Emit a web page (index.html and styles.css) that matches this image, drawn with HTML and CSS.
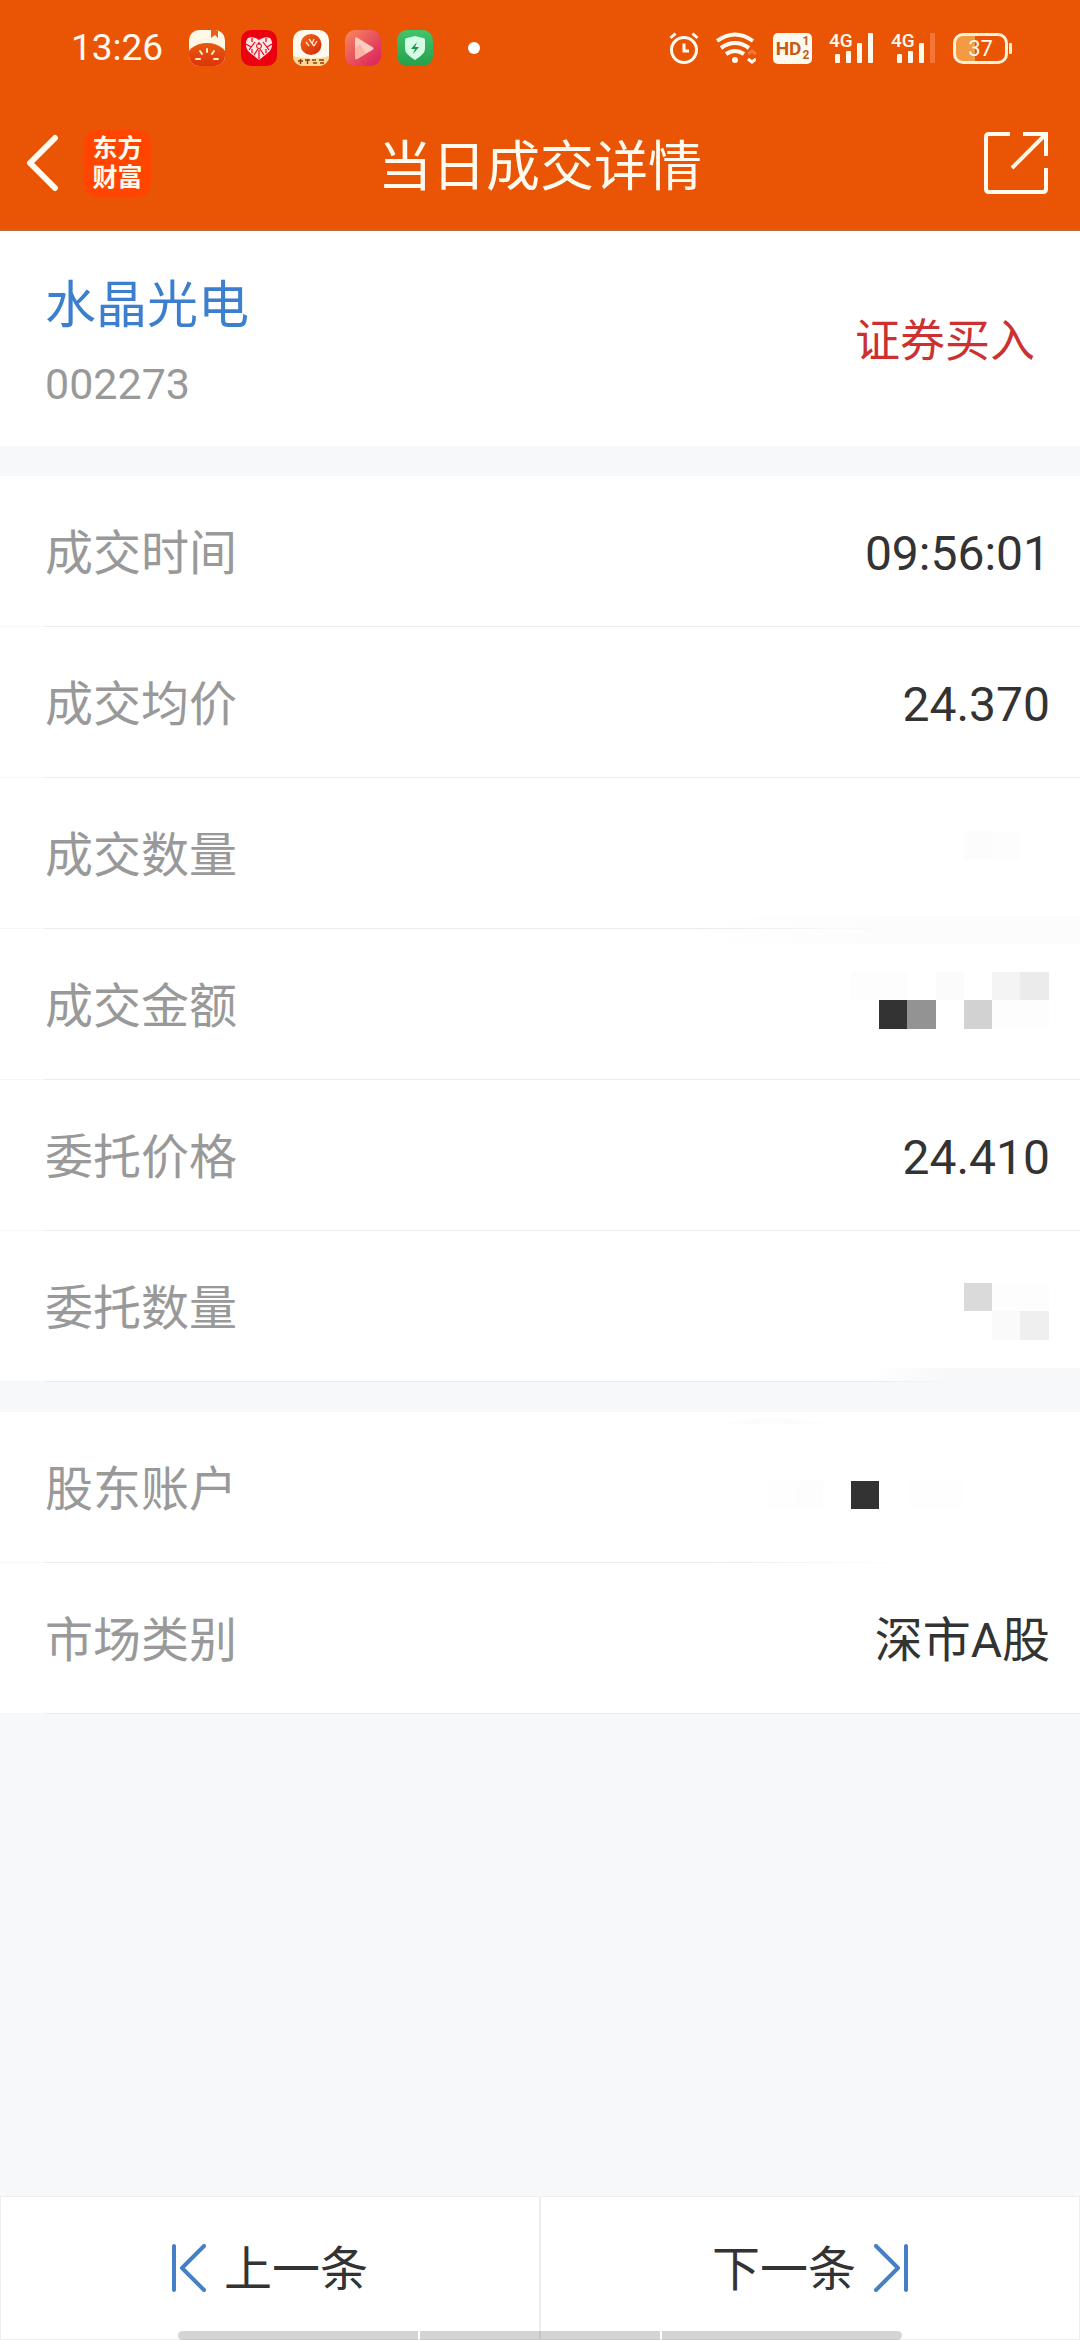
FILE: index.html
```html
<!DOCTYPE html>
<html lang="zh-CN">
<head>
<meta charset="utf-8">
<meta name="viewport" content="width=device-width, initial-scale=1">
<title>当日成交详情</title>
<link rel="stylesheet" href="styles.css">
</head>
<body>
<div class="app">
  <header class="top">
    <div class="status">
      <time class="clock">13:26</time>
      <div class="apps">
        <svg class="app-icon" viewBox="0 0 36 36" aria-hidden="true">
          <defs>
            <clipPath id="tile"><rect width="36" height="36" rx="10"/></clipPath>
            <linearGradient id="melon" x1="0" y1="0" x2="0" y2="1"><stop offset="0" stop-color="#e85a10"/><stop offset="1" stop-color="#d81e08"/></linearGradient>
          </defs>
          <g clip-path="url(#tile)">
            <rect width="36" height="36" fill="#fff8e6"/>
            <path d="M22 0h7v8l-3-3-4 3z" fill="#e4601c"/>
            <ellipse cx="18" cy="31" rx="22" ry="18" fill="url(#melon)"/>
            <path d="M18 19v3M11 21l2 3M25 21l-2 3M7 29h4M25 29h4" stroke="#ffeac8" stroke-width="2" stroke-linecap="round"/>
          </g>
        </svg>
        <svg class="app-icon" viewBox="0 0 36 36" aria-hidden="true">
          <rect width="36" height="36" rx="10" fill="#ec0010"/>
          <path d="M18 30L8 22C4 18 4 11 7 8c4-2 8 0 11 2 3-2 7-4 11-2 3 3 3 10-1 14z" fill="#fbe6e6"/>
          <path d="M18 12v3M18 20v9M11 8v4M25 8v4M11 19v4M25 19v4M5 14l5 3M31 14l-5 3M14 12l-6 8M22 12l6 8M13 25l4-6M23 25l-4-6" fill="none" stroke="#ec0010" stroke-width="1.200"/>
          <circle cx="18" cy="16" r="2.500" fill="none" stroke="#ec0010" stroke-width="1"/>
        </svg>
        <svg class="app-icon" viewBox="0 0 36 36" aria-hidden="true">
          <defs><linearGradient id="ball" x1="0" y1="0" x2="1" y2="1"><stop offset="0" stop-color="#ee6a18"/><stop offset="1" stop-color="#d8260a"/></linearGradient></defs>
          <g clip-path="url(#tile)">
            <rect width="36" height="36" fill="#fffaf0"/>
            <path d="M0 26q18 5 36 0v10H0z" fill="#fbd796"/>
            <circle cx="18" cy="14.500" r="10.500" fill="url(#ball)"/>
            <path d="M13 12l3 4M16 9l5 7M21 9l-2 5M24 11l-3 5" stroke="#ffe2c4" stroke-width="1.400"/>
            <path d="M5 31h5M7.500 29v5M12 30h5M14.500 29v5M19 30h4M20 33h4M26 30h5M27 33h4" stroke="#8a4010" stroke-width="1.500"/>
          </g>
        </svg>
        <svg class="app-icon" viewBox="0 0 36 36" aria-hidden="true">
          <defs><linearGradient id="video" x1="0" y1="0" x2="1" y2="1"><stop offset="0" stop-color="#f98a5c"/><stop offset="1" stop-color="#d81c60"/></linearGradient></defs>
          <rect width="36" height="36" rx="10" fill="url(#video)"/>
          <path d="M10 8.500q0-2 2-1l16 10q1 1 0 2l-16 9.500q-2 .500-2-1z" fill="#fdcdc2"/>
          <path d="M10 19l5-5 6 9-9 6q-2 .500-2-1z" fill="#fbb4a4"/>
        </svg>
        <svg class="app-icon" viewBox="0 0 36 36" aria-hidden="true">
          <defs><linearGradient id="guard" x1="0" y1="0" x2="0" y2="1"><stop offset="0" stop-color="#42c46c"/><stop offset="1" stop-color="#26a04a"/></linearGradient></defs>
          <rect width="36" height="36" rx="10" fill="url(#guard)"/>
          <path d="M8 10q0-2 2-2l8-2 8 2q2 0 2 2v9q0 5-10 11Q8 24 8 19z" fill="#d4fbe4"/>
          <path d="M20 12l-6 7h4l-2 5 6-7h-4z" fill="#1c9348"/>
        </svg>
      </div>
      <span class="more-dot"></span>
      <div class="signals">
        <svg width="30" height="32" viewBox="0 0 30 32" fill="none" stroke="#fffaf0" aria-hidden="true">
          <circle cx="15" cy="18" r="12.500" stroke-width="3"/>
          <path d="M1.500 6l5-4.500M28.500 6l-5-4.500" stroke-width="3"/>
          <path d="M15 11.500V19h5" stroke-width="3"/>
        </svg>
        <svg width="40" height="32" viewBox="0 0 40 32" fill="none" stroke="#fffaf0" aria-hidden="true">
          <path d="M1 9Q19-4 37 9M5 16q14-10 28 0M10 22q9-6 18 0" stroke-width="4"/>
          <circle cx="19" cy="28" r="3" fill="#fffaf0" stroke="none"/>
          <path d="M32 22l4-3 4 3" stroke="#f47a3c" stroke-width="3"/>
          <path d="M32 27l4 3 4-3" stroke-width="3"/>
        </svg>
        <span class="hd">HD<span class="hd-sim"><span>1</span><span>2</span></span></span>
        <span class="cell"><span class="cell-type">4G</span>
          <svg width="45" height="32" viewBox="0 0 45 32" fill="#fffaf0" aria-hidden="true"><rect x="6" y="22" width="5" height="9" rx="1"/><rect x="17" y="19" width="5" height="12" rx="1"/><rect x="28" y="11" width="5" height="20" rx="1"/><rect x="39" y="1" width="5" height="30" rx="1"/></svg>
        </span>
        <span class="cell"><span class="cell-type">4G</span>
          <svg width="45" height="32" viewBox="0 0 45 32" fill="#fffaf0" aria-hidden="true"><rect x="6" y="22" width="5" height="9" rx="1"/><rect x="17" y="19" width="5" height="12" rx="1"/><rect x="28" y="11" width="5" height="20" rx="1"/><rect x="39" y="1" width="5" height="30" rx="1" fill="#f4743a"/></svg>
        </span>
        <span class="battery">37</span>
      </div>
    </div>
    <div class="bar">
      <div class="bar-left">
        <button class="icon-button" type="button" aria-label="返回">
          <svg width="34" height="58" viewBox="0 0 34 58" fill="none" stroke="#fffaf0" stroke-width="6" stroke-linecap="round" stroke-linejoin="round" aria-hidden="true"><path d="M29 4L4 29l25 25"/></svg>
        </button>
        <span class="brand"><span>东方</span><span>财富</span></span>
      </div>
      <h1 class="title">当日成交详情</h1>
      <button class="icon-button share" type="button" aria-label="分享">
        <svg width="64" height="64" viewBox="0 0 64 64" fill="none" stroke="#fffaf0" stroke-width="4" aria-hidden="true"><path d="M26 3H5Q2 3 2 6v52q0 3 3 3h54q3 0 3-3V37M39 3h23v22M61 4L28 37"/></svg>
      </button>
    </div>
  </header>

  <main class="content">
    <section class="stock">
      <div class="stock-id">
        <a class="stock-name" href="#">水晶光电</a>
        <span class="stock-code">002273</span>
      </div>
      <span class="side">证券买入</span>
    </section>

    <dl class="group">
      <div class="row"><dt>成交时间</dt><dd>09:56:01</dd></div>
      <div class="row"><dt>成交均价</dt><dd>24.370</dd></div>
      <div class="row"><dt>成交数量</dt><dd>
        <svg class="mosaic" viewBox="0 0 380 151" aria-hidden="true">
          <defs><linearGradient id="haze"><stop offset="0" stop-color="#fcfcfc" stop-opacity="0"/><stop offset=".5" stop-color="#fcfcfc"/></linearGradient></defs>
          <rect x="264" y="53" width="28" height="28" fill="#fcfcfc"/><rect x="292" y="53" width="28" height="28" fill="#fdfdfd"/>
          <rect y="138" width="380" height="13" fill="url(#haze)"/>
        </svg></dd></div>
      <div class="row"><dt>成交金额</dt><dd>
        <svg class="mosaic" viewBox="0 0 380 151" aria-hidden="true">
          <rect width="380" height="15" fill="url(#haze)"/>
          <rect x="151" y="43" width="56" height="28" fill="#fdfdfd"/><rect x="236" y="43" width="28" height="28" fill="#fbfbfb"/><rect x="292" y="43" width="28" height="28" fill="#f4f4f4"/><rect x="320" y="43" width="29" height="28" fill="#ebebeb"/>
          <rect x="179" y="71" width="28" height="29" fill="#333"/><rect x="207" y="71" width="29" height="29" fill="#939393"/><rect x="264" y="71" width="28" height="29" fill="#d2d2d2"/><rect x="292" y="71" width="57" height="29" fill="#fdfdfd"/>
        </svg></dd></div>
      <div class="row"><dt>委托价格</dt><dd>24.410</dd></div>
      <div class="row"><dt>委托数量</dt><dd>
        <svg class="mosaic" viewBox="0 0 380 151" aria-hidden="true">
          <defs><linearGradient id="mist"><stop offset=".45" stop-color="#f7f8fa" stop-opacity="0"/><stop offset=".65" stop-color="#f7f8fa"/></linearGradient></defs>
          <rect x="264" y="52" width="28" height="28" fill="#dadada"/><rect x="292" y="52" width="57" height="28" fill="#fdfdfd"/>
          <rect x="292" y="80" width="28" height="29" fill="#fafafa"/><rect x="320" y="80" width="29" height="29" fill="#efefef"/>
          <rect y="137" width="380" height="14" fill="url(#mist)"/>
        </svg></dd></div>
    </dl>

    <dl class="group">
      <div class="row"><dt>股东账户</dt><dd>
        <svg class="mosaic" viewBox="0 0 380 151" aria-hidden="true">
          <defs><linearGradient id="fade"><stop offset="0" stop-color="#fff" stop-opacity="0"/><stop offset=".55" stop-color="#fff"/></linearGradient></defs>
          <rect x="67" y="69" width="28" height="28" fill="#fefefe"/><rect x="95" y="69" width="28" height="28" fill="#fdfdfd"/><rect x="151" y="69" width="28" height="28" fill="#333"/><rect x="208" y="69" width="56" height="28" fill="#fefefe"/>
          <path d="M24 12q50-12 100 0z" fill="#fcfcfc"/>
          <rect y="138" width="380" height="13" fill="url(#fade)"/>
        </svg></dd></div>
      <div class="row"><dt>市场类别</dt><dd>深市A股</dd></div>
    </dl>
  </main>

  <nav class="pager">
    <button class="page-button" type="button">
      <svg width="34" height="48" viewBox="0 0 34 48" fill="none" stroke="#457fc4" stroke-width="4" stroke-linecap="round" stroke-linejoin="round" aria-hidden="true"><path d="M2 2v44M32 2L10 24l22 22"/></svg>
      <span class="page-label">上一条</span>
    </button>
    <button class="page-button" type="button">
      <span class="page-label">下一条</span>
      <svg width="34" height="48" viewBox="0 0 34 48" fill="none" stroke="#457fc4" stroke-width="4" stroke-linecap="round" stroke-linejoin="round" aria-hidden="true"><path d="M32 2v44M2 2l22 22L2 46"/></svg>
    </button>
    <div class="home-bar"><span></span><span></span><span></span></div>
  </nav>
</div>
</body>
</html>
```

FILE: styles.css
```css
* { box-sizing: border-box; }

body {
  margin: 0;
  background: #f7f8fa;
  color: #333;
  font-family: Roboto, "Noto Sans CJK SC", sans-serif;
}

button {
  margin: 0;
  padding: 0;
  border: 0;
  background: none;
  color: inherit;
  font: inherit;
}

svg { display: block; flex: none; }

.app {
  display: flex;
  flex-direction: column;
  min-height: 100vh;
}

/* Header */
.top {
  background: #e95504;
  border-bottom: 1px solid #b8703c;
  color: #fffaf0;
}

.status {
  display: flex;
  align-items: center;
  height: 96px;
  padding: 0 68px 0 71px;
}

.clock { width: 118px; font-size: 37px; line-height: 48px; }

.apps { display: flex; gap: 16px; }

.app-icon { width: 36px; height: 36px; }

.more-dot {
  width: 12px;
  height: 12px;
  margin-left: 35px;
  border-radius: 50%;
  background: #fff;
}

.signals {
  display: flex;
  align-items: center;
  gap: 17px;
  margin-left: auto;
}

.hd {
  display: flex;
  align-items: center;
  justify-content: center;
  gap: 1px;
  width: 39px;
  height: 31px;
  border-radius: 5px;
  background: #fffaf0;
  color: #c85a14;
  font-size: 19px;
  font-weight: 700;
  line-height: 31px;
}

.hd-sim {
  display: flex;
  flex-direction: column;
  font-size: 12px;
  line-height: 14px;
}

.cell { position: relative; }

.cell-type {
  position: absolute;
  top: 0;
  left: 0;
  font-size: 19px;
  font-weight: 500;
  line-height: 18px;
}

.battery {
  position: relative;
  width: 55px;
  height: 31px;
  margin-right: 4px;
  border: 3px solid #fff0d8;
  border-radius: 10px;
  background: linear-gradient(90deg, #f39a42 38%, transparent 38%);
  font-size: 22px;
  line-height: 25px;
  text-align: center;
}

.battery::after {
  content: "";
  position: absolute;
  top: 7px;
  right: -7px;
  width: 3px;
  height: 11px;
  border-radius: 1px;
  background: #fff0d8;
}

.bar {
  display: grid;
  grid-template-columns: 1fr auto 1fr;
  align-items: center;
  height: 134px;
  padding: 0 26px;
}

.bar-left { display: flex; align-items: center; gap: 24px; }

.brand {
  display: flex;
  flex-direction: column;
  align-items: center;
  justify-content: center;
  width: 67px;
  height: 67px;
  border-radius: 14px;
  background: #ff4500;
  font-size: 25px;
  font-weight: 700;
  line-height: 29px;
}

.title {
  margin: 0;
  padding-top: 10px;
  font-size: 54px;
  font-weight: 400;
  line-height: 72px;
}

.share { justify-self: end; margin-right: 6px; }

/* Stock summary */
.content { flex: 1; }

.stock {
  display: flex;
  align-items: center;
  justify-content: space-between;
  height: 215px;
  padding: 6px 45px 0;
  background: #fff;
}

.stock-id {
  display: flex;
  flex-direction: column;
  gap: 16px;
}

.stock-name {
  color: #3b7fce;
  font-size: 51px;
  line-height: 68px;
  text-decoration: none;
}

.stock-code {
  color: #999;
  font-size: 43px;
  line-height: 56px;
}

.side {
  color: #cc3030;
  font-size: 45px;
  line-height: 60px;
}

/* Detail rows */
.group {
  margin: 30px 0 0;
  background: #fff;
}

.row {
  position: relative;
  display: flex;
  align-items: center;
  justify-content: space-between;
  height: 151px;
  padding: 4px 30px 0 45px;
  background: linear-gradient(90deg, #f7f7f7 45px, #ebebeb 45px) bottom / 100% 1px no-repeat;
  font-size: 48px;
  line-height: 64px;
}

.row dt { color: #999; }

.row dd { margin: 0; }

.mosaic {
  position: absolute;
  top: 0;
  right: 0;
  width: 380px;
  height: 151px;
}

/* Previous / next */
.pager {
  position: relative;
  display: grid;
  grid-template-columns: 1fr 1fr;
  background: #fff;
}

.page-button {
  display: flex;
  align-items: center;
  justify-content: center;
  gap: 18px;
  height: 144px;
  border: 1px solid #eee;
  font-size: 48px;
  line-height: 64px;
}

.page-label { padding-top: 4px; }

.home-bar {
  position: absolute;
  right: 0;
  bottom: 0;
  left: 0;
  display: grid;
  grid-template-columns: 1fr 1fr 1fr;
  gap: 2px;
  width: 67%;
  height: 9px;
  margin: 0 auto;
  border-radius: 5px;
  overflow: hidden;
}

.home-bar span { background: rgba(0, 0, 0, .17); }
```
